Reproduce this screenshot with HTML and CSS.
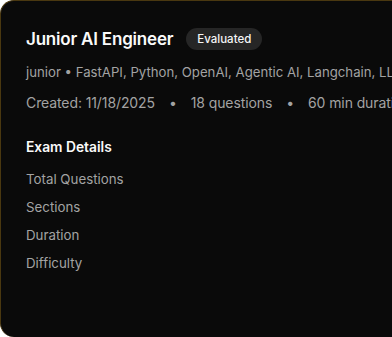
FILE: index.html
```html
<!DOCTYPE html>
<html>
<head>
<meta charset="utf-8">
<link rel="stylesheet" href="styles.css">
</head>
<body>
<div class="card">
  <div class="head">
    <h1 class="title">Junior AI Engineer</h1>
    <span class="badge">Evaluated</span>
  </div>
  <p class="sub">junior • FastAPI, Python, OpenAI, Agentic AI, Langchain, LLM</p>
  <div class="meta">
    <span>Created: 11/18/2025</span>
    <span class="dot">•</span>
    <span>18 questions</span>
    <span class="dot">•</span>
    <span>60 min duration</span>
  </div>
  <h2 class="section">Exam Details</h2>
  <ul class="details">
    <li>Total Questions</li>
    <li>Sections</li>
    <li>Duration</li>
    <li>Difficulty</li>
  </ul>
</div>
</body>
</html>
```
FILE: styles.css
```css
html, body {
  margin: 0;
  padding: 0;
  background: #ffffff;
  overflow: hidden;
}
body {
  font-family: Inter, "Noto Sans", sans-serif;
  width: 392px;
  height: 337px;
}
.card {
  box-sizing: border-box;
  width: 420px;
  height: 337px;
  background: #0a0a0a;
  border-top: 1px solid #4a3810;
  border-left: 1px solid #4a3810;
  border-radius: 14px;
  padding: 24px 25px;
  white-space: nowrap;
  overflow: hidden;
}
.head {
  display: flex;
  align-items: center;
  gap: 13px;
  height: 28px;
}
.title {
  margin: 0;
  font-size: 17px;
  line-height: 28px;
  font-weight: 600;
  color: #fafafa;
  letter-spacing: -0.2px;
}
.badge {
  background: #262626;
  color: #f5f5f5;
  font-size: 11.5px;
  line-height: 14px;
  font-weight: 500;
  padding: 4px 11px;
  border-radius: 999px;
}
.sub {
  margin: 9px 0 0;
  font-size: 13.2px;
  line-height: 20px;
  color: #a3a3a3;
}
.meta {
  margin-top: 11px;
  display: flex;
  gap: 14px;
  font-size: 14px;
  letter-spacing: -0.1px;
  line-height: 20px;
  color: #a3a3a3;
}
.section {
  margin: 24px 0 0;
  font-size: 13.8px;
  line-height: 20px;
  font-weight: 600;
  color: #fafafa;
}
.details {
  list-style: none;
  margin: 12px 0 0;
  padding: 0;
  display: flex;
  flex-direction: column;
  gap: 8px;
  font-size: 13.3px;
  line-height: 20px;
  color: #a3a3a3;
}
```
